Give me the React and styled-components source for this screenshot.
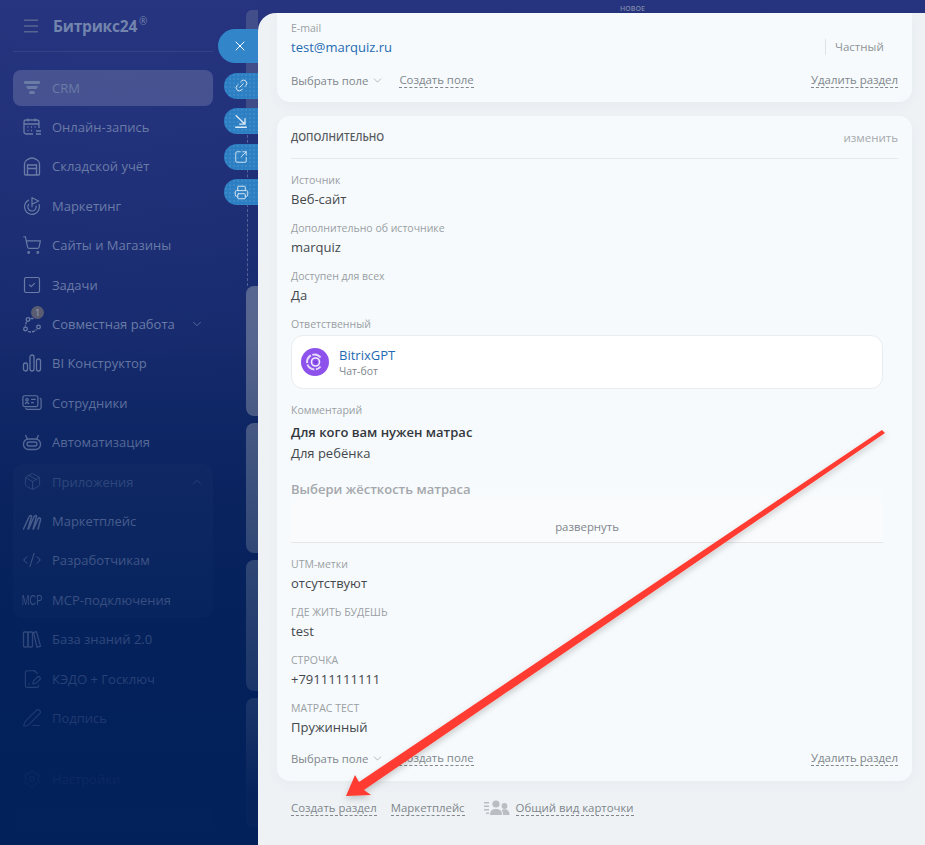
import React from 'react'
import styled, { createGlobalStyle } from 'styled-components'
import {
  Menu, X, Link2, SquareArrowOutUpRight, Printer, ChevronDown, ChevronUp, Goal,
  ShoppingCart, SquareCheck, Package, CodeXml, FileSignature, PenLine, Settings,
} from 'lucide-react'

const GlobalStyle = createGlobalStyle`
  html, body { margin: 0; padding: 0; background: #02215c; }
  body { font-family: "Open Sans", "Noto Sans", sans-serif; }
`

const iconProps = {
  width: 20, height: 20, viewBox: '0 0 20 20', fill: 'none', stroke: 'currentColor', strokeWidth: 1.3,
}

const FunnelIcon = () => (
  <svg width="20" height="20" viewBox="0 0 20 20" fill="currentColor">
    <rect x="2" y="3" width="16" height="3" rx="1" />
    <path d="M4 8h12l-1.500 3h-9z" />
    <rect x="7" y="13" width="6" height="3" rx="1.500" />
  </svg>
)

const CalendarIcon = () => (
  <svg {...iconProps}>
    <path d="M11 17H4a2 2 0 0 1-2-2V5a2 2 0 0 1 2-2h11a2 2 0 0 1 2 2v6M2 7h15M6 1.500v3M13 1.500v3" />
    <path d="M14 14h5M14 17h5" />
    <path d="M5.500 10h1M9 10h1M12.500 10h1M5.500 13.500h1M9 13.500h1" strokeWidth="1.500" />
  </svg>
)

const StorageIcon = () => (
  <svg {...iconProps}>
    <path d="M2.500 18V7.500C2.500 5 7 2 10 2s7.500 3 7.500 5.500V18a1 1 0 0 1-1 1h-13a1 1 0 0 1-1-1z" />
    <path d="M5.500 19V9h9v10M5.500 12.500h9" />
  </svg>
)

const CircleNodesIcon = () => (
  <svg {...iconProps}>
    <circle cx="6" cy="5.500" r="1.800" />
    <circle cx="3.500" cy="15" r="1.800" />
    <circle cx="16.500" cy="13" r="1.800" />
    <path d="M4.500 7.500 3.200 12.500M6 17.500c3 1 6 .5 8.500-2M8.500 4.500h3" strokeDasharray="3 1" />
  </svg>
)

const BarsIcon = () => (
  <svg {...iconProps}>
    <rect x="1.500" y="10" width="4" height="8" rx="2" />
    <rect x="8" y="2" width="4" height="16" rx="2" />
    <rect x="14.500" y="6" width="4" height="12" rx="2" />
  </svg>
)

const StaffIcon = () => (
  <svg width="20" height="20" viewBox="0 0 22 22" fill="none" stroke="currentColor" strokeWidth="1.300">
    <rect x="1" y="3" width="16.500" height="12" rx="2" />
    <path d="M19.500 5.500c1 .3 1.500 1 1.500 2V16a2 2 0 0 1-2 2H6c-1 0-1.700-.5-2-1.500" />
    <circle cx="5.500" cy="7.500" r="1.400" />
    <path d="M3.500 12.500c0-1.500 1-2 2-2s2 .5 2 2M10 7h5M10 10.500h3" />
  </svg>
)

const RobotIcon = () => (
  <svg {...iconProps}>
    <path d="M5.500 7.500 3.500 3M14.500 7.500l2-4.500" />
    <rect x="1.500" y="7" width="17" height="10.500" rx="5" />
    <rect x="5" y="10" width="10" height="4" rx="2" />
    <path d="M8 12h.1M12 12h.1" strokeWidth="1.600" />
  </svg>
)

const SlashesIcon = () => (
  <svg width="20" height="20" viewBox="0 0 20 20" fill="none" stroke="currentColor" strokeWidth="1.500" strokeLinecap="round">
    <path d="M1.500 18 7 6c1-2 3-2 2.500 0L6 18M6.500 18 12 6c1-2 3-2 2.500 0L11 18M11.500 18 16 8c1-2 3-1 2.500 1L16 18" />
  </svg>
)

const BooksIcon = () => (
  <svg {...iconProps}>
    <rect x="1.500" y="3" width="4.500" height="15" rx="1" />
    <rect x="6" y="3" width="4.500" height="15" rx="1" />
    <path d="m11.500 3.500 3-.8 4 14.500-3.500 1z" />
  </svg>
)

const DownloadArrowIcon = () => (
  <svg width="16" height="16" viewBox="0 0 18 18" fill="none" stroke="currentColor" strokeWidth="1.500">
    <path d="M3 2.500 13 12M7 12.500h6.500V6M2.500 16h13" />
  </svg>
)

const PeopleIcon = () => (
  <svg width="26" height="16" viewBox="0 0 26 16" fill="#b9bec3">
    <path d="M0 2h5v1.400H0zM0 5.500h5v1.400H0zM0 9h5v1.400H0zM2 12.500h3v1.400H2z" />
    <circle cx="12" cy="4" r="3.600" />
    <path d="M6 15c0-4 2-6 6-6s6 2 6 6z" />
    <circle cx="20.500" cy="6" r="2.900" />
    <path d="M19 15c0-2-.5-4-1.500-5 1-.6 2-.8 3-.8 3 0 5 2 5 5.800z" />
  </svg>
)

const GptAvatar = () => (
  <svg width="28" height="28" viewBox="0 0 28 28">
    <circle cx="14" cy="14" r="14" fill="#8e52ec" />
    <path d="M19.500 9.500a7.500 7.500 0 1 0 0 9" fill="none" stroke="#e6dbfb" strokeWidth="2" strokeDasharray="9 1.500" />
    <circle cx="14.500" cy="14" r="4" fill="none" stroke="#f3edfe" strokeWidth="1.600" />
    <circle cx="14.500" cy="14" r="1.500" fill="#7a3ee0" />
  </svg>
)

const menuTop = [
  { label: 'Онлайн-запись', icon: <CalendarIcon /> },
  { label: 'Складской учёт', icon: <StorageIcon /> },
  { label: 'Маркетинг', icon: <Goal size={20} strokeWidth={1.4} /> },
  { label: 'Сайты и Магазины', icon: <ShoppingCart size={20} strokeWidth={1.4} /> },
  { label: 'Задачи', icon: <SquareCheck size={20} strokeWidth={1.4} /> },
]

const menuMiddle = [
  { label: 'BI Конструктор', icon: <BarsIcon /> },
  { label: 'Сотрудники', icon: <StaffIcon /> },
  { label: 'Автоматизация', icon: <RobotIcon /> },
]

const menuBottom = [
  { label: 'База знаний 2.0', icon: <BooksIcon /> },
  { label: 'КЭДО + Госключ', icon: <FileSignature size={20} strokeWidth={1.3} /> },
  { label: 'Подпись', icon: <PenLine size={20} strokeWidth={1.3} /> },
]

const extraFields = [
  { label: 'Источник', value: 'Веб-сайт' },
  { label: 'Дополнительно об источнике', value: 'marquiz' },
  { label: 'Доступен для всех', value: 'Да' },
]

const customFields = [
  { label: 'UTM-метки', value: 'отсутствуют' },
  { label: 'ГДЕ ЖИТЬ БУДЕШЬ', value: 'test' },
  { label: 'СТРОЧКА', value: '+79111111111' },
  { label: 'МАТРАС ТЕСТ', value: 'Пружинный' },
]

const slabs = [130, 130, 131, 130]

const MenuItem = ({ item, active }) => (
  <Item $active={active}>
    <ItemIcon>{item.icon}</ItemIcon>
    <span>{item.label}</span>
  </Item>
)

const CardFooter = () => (
  <FooterRow>
    <SelectField>Выбрать поле <ChevronDown size={13} strokeWidth={1} /></SelectField>
    <DashedLink>Создать поле</DashedLink>
    <RightLink>Удалить раздел</RightLink>
  </FooterRow>
)

const Field = ({ label, value }) => (
  <FieldBox>
    <FieldLabel>{label}</FieldLabel>
    <FieldValue>{value}</FieldValue>
  </FieldBox>
)

export default function App() {
  return (
    <Page>
      <GlobalStyle />
      <LeftArea>
        <Sidebar>
          <Header>
            <Menu size={20} strokeWidth={1.1} />
            <Logo>Битрикс24<sup>®</sup></Logo>
          </Header>
          <MenuItem active item={{ label: 'CRM', icon: <FunnelIcon /> }} />
          {menuTop.map(item => <MenuItem key={item.label} item={item} />)}
          <Item>
            <ItemIcon><CircleNodesIcon /><Badge>1</Badge></ItemIcon>
            <span>Совместная работа</span>
            <ItemChevron><ChevronDown size={14} strokeWidth={1.3} /></ItemChevron>
          </Item>
          {menuMiddle.map(item => <MenuItem key={item.label} item={item} />)}
          <Group>
            <Item $dim>
              <ItemIcon><Package size={19} strokeWidth={1.2} /></ItemIcon>
              <span>Приложения</span>
              <ItemChevron><ChevronUp size={14} strokeWidth={1.3} /></ItemChevron>
            </Item>
            <MenuItem item={{ label: 'Маркетплейс', icon: <SlashesIcon /> }} />
            <MenuItem item={{ label: 'Разработчикам', icon: <CodeXml size={20} strokeWidth={1.2} /> }} />
            <MenuItem item={{ label: 'МСР-подключения', icon: <McpMark>MCP</McpMark> }} />
          </Group>
          {menuBottom.map(item => <MenuItem key={item.label} item={item} />)}
          <SettingsItem>
            <ItemIcon><Settings size={20} strokeWidth={1.2} /></ItemIcon>
            <span>Настройки</span>
          </SettingsItem>
          <UserBar />
        </Sidebar>
        <BackStrip>
          <TopSlab />
          <DashedGuide />
          {slabs.map((h, i) => <Slab key={i} $height={h} />)}
        </BackStrip>
      </LeftArea>

      <RightArea>
        <TopStrip>НОВОЕ</TopStrip>
        <Panel>
          <FirstCard>
            <EmailRow>
              <FieldBox>
                <FieldLabel>E-mail</FieldLabel>
                <EmailValue>test@marquiz.ru</EmailValue>
              </FieldBox>
              <EmailType>Частный</EmailType>
            </EmailRow>
            <CardFooter />
          </FirstCard>

          <SecondCard>
            <CardHead>
              <CardTitle>ДОПОЛНИТЕЛЬНО</CardTitle>
              <EditLink>изменить</EditLink>
            </CardHead>
            <FieldList>
              {extraFields.map(f => <Field key={f.label} {...f} />)}
              <FieldLabel>Ответственный</FieldLabel>
              <PersonCard>
                <GptAvatar />
                <PersonText>
                  <PersonName>BitrixGPT</PersonName>
                  <PersonRole>Чат-бот</PersonRole>
                </PersonText>
              </PersonCard>
              <CommentLabel>Комментарий</CommentLabel>
              <CommentBold>Для кого вам нужен матрас</CommentBold>
              <CommentText>Для ребёнка</CommentText>
              <Collapsed>
                <FadedText>Выбери жёсткость матраса</FadedText>
                <Expand>развернуть</Expand>
              </Collapsed>
              {customFields.map(f => <Field key={f.label} {...f} />)}
            </FieldList>
            <CardFooter />
          </SecondCard>

          <BottomLinks>
            <DashedLink>Создать раздел</DashedLink>
            <DashedLink>Маркетплейс</DashedLink>
            <ViewLink>
              <PeopleIcon />
              <DashedLink>Общий вид карточки</DashedLink>
            </ViewLink>
          </BottomLinks>
        </Panel>
      </RightArea>

      <SideButtons>
        <CloseButton><X size={16} strokeWidth={1.5} /></CloseButton>
        <SideButton><Link2 size={15} strokeWidth={1.5} style={{ transform: 'rotate(-45deg)' }} /></SideButton>
        <SideButton><DownloadArrowIcon /></SideButton>
        <SideButton><SquareArrowOutUpRight size={14} strokeWidth={1.5} /></SideButton>
        <SideButton><Printer size={15} strokeWidth={1.5} /></SideButton>
      </SideButtons>

      <ArrowOverlay width="925" height="845" viewBox="0 0 925 845">
        <defs>
          <filter id="arrowShadow" x="-10%" y="-10%" width="120%" height="120%">
            <feDropShadow dx="0" dy="3" stdDeviation="3" floodColor="#000" floodOpacity=".2" />
          </filter>
        </defs>
        <polygon
          filter="url(#arrowShadow)"
          fill="#ff3b30"
          points="882,430 885,433 364,790 371,795 346,796 355,775 359,782"
        />
      </ArrowOverlay>
    </Page>
  )
}

const Page = styled.div`
  position: relative;
  display: flex;
  width: 925px;
  height: 845px;
  overflow: hidden;
  background: radial-gradient(circle at 120px 90px, rgba(43, 58, 136, .25) 0, rgba(43, 58, 136, 0) 300px),
    linear-gradient(180deg, #26337e 0%, #182b6f 35%, #0d2562 60%, #03215b 90%);
`

const LeftArea = styled.div`
  position: relative;
  display: flex;
  flex: 0 0 258px;
  &::after {
    content: '';
    position: absolute;
    inset: 0;
    pointer-events: none;
    background: linear-gradient(180deg, rgba(2, 32, 90, 0) 40%, rgba(2, 32, 90, .35) 62%, rgba(2, 32, 90, .72) 85%, rgba(2, 32, 90, .95) 94%);
  }
`

const Sidebar = styled.nav`
  flex: 0 0 225px;
  min-width: 0;
  box-sizing: border-box;
  padding: 0 12px 0 13px;
  color: #6a7ba6;
  font-size: 13px;
  font-weight: 500;
`

const Header = styled.div`
  display: flex;
  align-items: center;
  gap: 12px;
  height: 51px;
  margin-bottom: 17.500px;
  padding-left: 8px;
  border-bottom: 1px solid rgba(255, 255, 255, .07);
  color: #76869f;
`

const Logo = styled.div`
  color: #7384ad;
  font-size: 15.500px;
  font-weight: 700;
  letter-spacing: -.2px;
  sup {
    margin-left: 2px;
    font-size: 10px;
    font-weight: 400;
    line-height: 0;
  }
`

const Item = styled.div`
  display: flex;
  align-items: center;
  gap: 10px;
  height: 36px;
  margin-bottom: 3.420px;
  padding-left: 9px;
  border-radius: 8px;
  white-space: nowrap;
  color: ${p => (p.$dim ? '#3e5488' : 'inherit')};
  background: ${p => (p.$active ? 'rgba(255, 255, 255, .16)' : 'transparent')};
`

const ItemIcon = styled.span`
  position: relative;
  display: flex;
  flex: 0 0 20px;
  justify-content: center;
`

const ItemChevron = styled.span`
  display: flex;
  margin-left: auto;
  margin-right: 9px;
`

const Badge = styled.span`
  position: absolute;
  top: -8px;
  left: 9px;
  width: 13px;
  height: 13px;
  border-radius: 50%;
  background: #5a5d72;
  color: #9da3b2;
  font-size: 9px;
  font-weight: 400;
  line-height: 13px;
  text-align: center;
`

const Group = styled.div`
  margin: 0 0 3.420px;
  border-radius: 10px;
  background: rgba(255, 255, 255, .025);
  & > div:last-child { margin-bottom: 0; }
`

const McpMark = styled.span`
  display: flex;
  justify-content: center;
  width: 20px;
  transform: scaleX(.62);
  font-family: "Liberation Sans", sans-serif;
  font-size: 15px;
  font-weight: 400;
  line-height: 1;
`

const SettingsItem = styled(Item)`
  margin-top: 24.500px;
`

const UserBar = styled.div`
  height: 25px;
  margin: 10px 1px 0 2px;
  border-radius: 6px;
  background: rgba(80, 110, 190, .2);
`

const BackStrip = styled.div`
  display: flex;
  flex: 1;
  flex-direction: column;
  padding: 10px 0 0 21px;
`

const TopSlab = styled.div`
  flex: 0 0 120px;
  border-radius: 6px 0 0 6px;
  background: rgba(120, 130, 160, .35);
`

const DashedGuide = styled.div`
  flex: 0 0 156px;
  margin-left: 1px;
  border-left: 1px dashed rgba(255, 255, 255, .25);
`

const Slab = styled.div`
  flex: 0 0 ${p => p.$height}px;
  margin-bottom: 7px;
  border-radius: 8px 0 0 8px;
  background: rgba(150, 160, 175, .5);
`

const RightArea = styled.div`
  display: flex;
  flex: 1;
  flex-direction: column;
  min-width: 0;
`

const TopStrip = styled.div`
  flex: 0 0 13px;
  padding-left: 362px;
  color: #7c88a8;
  font-size: 7px;
  font-weight: 600;
  line-height: 18px;
  overflow: hidden;
`

const Panel = styled.main`
  flex: 1;
  padding: 0 13px 0 19px;
  border-radius: 18px 0 0 0;
  background: #eef2f5;
  color: #333;
`

const Card = styled.section`
  box-sizing: border-box;
  padding: 0 14px;
  background: #f6fafc;
  box-shadow: 0 4px 12px rgba(60, 80, 100, .035);
`

const FirstCard = styled(Card)`
  height: 89px;
  padding-top: 7px;
  border-radius: 0 0 13px 13px;
`

const SecondCard = styled(Card)`
  height: 665px;
  margin-top: 14px;
  border-radius: 13px;
`

const EmailRow = styled.div`
  display: flex;
  justify-content: space-between;
  height: 50px;
`

const EmailValue = styled.div`
  margin-top: 1px;
  color: #1f6ab2;
  font-size: 13px;
  line-height: 21px;
`

const EmailType = styled.div`
  box-sizing: border-box;
  width: 73px;
  height: 16px;
  margin-top: 19px;
  padding-left: 9px;
  border-left: 1px solid #dfe3e6;
  color: #8f9499;
  font-size: 11.500px;
  line-height: 16px;
`

const FooterRow = styled.div`
  display: flex;
  align-items: center;
  height: 20px;
  font-size: 11.300px;
  color: #80868c;
`

const SelectField = styled.span`
  display: flex;
  align-items: center;
  gap: 3px;
  margin-right: 15px;
`

const DashedLink = styled.span`
  border-bottom: 1px dashed #80868c;
  color: #80868c;
  font-size: 11.400px;
  line-height: 14px;
  white-space: nowrap;
`

const RightLink = styled(DashedLink)`
  margin-left: auto;
`

const CardHead = styled.div`
  display: flex;
  align-items: center;
  justify-content: space-between;
  height: 42px;
  border-bottom: 1px solid #e6eaed;
`

const CardTitle = styled.div`
  color: #55595e;
  font-size: 10px;
  font-weight: 600;
`

const EditLink = styled.span`
  color: #a5a9ad;
  font-size: 11.500px;
`

const FieldList = styled.div`
  padding-top: 13px;
`

const FieldBox = styled.div`
  margin-bottom: 10px;
`

const FieldLabel = styled.div`
  color: #9a9fa4;
  font-size: 10.500px;
  line-height: 16px;
`

const FieldValue = styled.div`
  margin-top: 1px;
  color: #44484d;
  font-size: 13px;
  line-height: 21px;
`

const PersonCard = styled.div`
  display: flex;
  align-items: center;
  gap: 10px;
  box-sizing: border-box;
  width: 592px;
  height: 54px;
  margin-top: 3px;
  padding-left: 9px;
  border: 1px solid #e8edf1;
  border-radius: 12px;
  background: #fff;
`

const PersonText = styled.div`
  display: flex;
  flex-direction: column;
`

const PersonName = styled.div`
  color: #1f6ab2;
  font-size: 13px;
  line-height: 18px;
`

const PersonRole = styled.div`
  color: #80868c;
  font-size: 10.500px;
  line-height: 14px;
`

const CommentLabel = styled(FieldLabel)`
  margin-top: 13px;
`

const CommentBold = styled(FieldValue)`
  margin-top: 4px;
  font-weight: 600;
  color: #33373c;
`

const CommentText = styled(FieldValue)`
  margin-top: 0;
`

const Collapsed = styled.div`
  box-sizing: border-box;
  width: 592px;
  height: 64px;
  margin: 15px 0 13px;
  border-bottom: 1px solid #e3e7ea;
  background: linear-gradient(180deg, rgba(255, 255, 255, 0), #f9fbfd 40%);
`

const FadedText = styled.div`
  color: #a4a7ab;
  font-size: 13px;
  font-weight: 600;
  line-height: 20px;
`

const Expand = styled.div`
  padding-top: 20px;
  color: #80868c;
  font-size: 11.400px;
  text-align: center;
`

const BottomLinks = styled.div`
  display: flex;
  align-items: center;
  gap: 14px;
  height: 20px;
  margin-top: 17px;
  padding-left: 14px;
`

const ViewLink = styled.div`
  display: flex;
  align-items: center;
  gap: 6px;
  margin-left: 5px;
`

const SideButtons = styled.div`
  position: absolute;
  top: 29px;
  left: 218px;
  display: flex;
  flex-direction: column;
  align-items: flex-end;
  gap: 9.500px;
  width: 40px;
`

const SideButton = styled.button`
  display: flex;
  align-items: center;
  justify-content: center;
  width: 34px;
  height: 26px;
  padding: 0;
  border: 0;
  border-radius: 13px 0 0 13px;
  color: #dcebf8;
  background: radial-gradient(rgba(255, 255, 255, .08) 1px, transparent 1px) 0 0 / 4px 4px, #2c7fc3;
`

const CloseButton = styled(SideButton)`
  width: 40px;
  height: 34px;
  padding-left: 4px;
  border-radius: 17px 0 0 17px;
  color: #fff;
  background: #3385c9;
`

const ArrowOverlay = styled.svg`
  position: absolute;
  inset: 0;
  pointer-events: none;
`
